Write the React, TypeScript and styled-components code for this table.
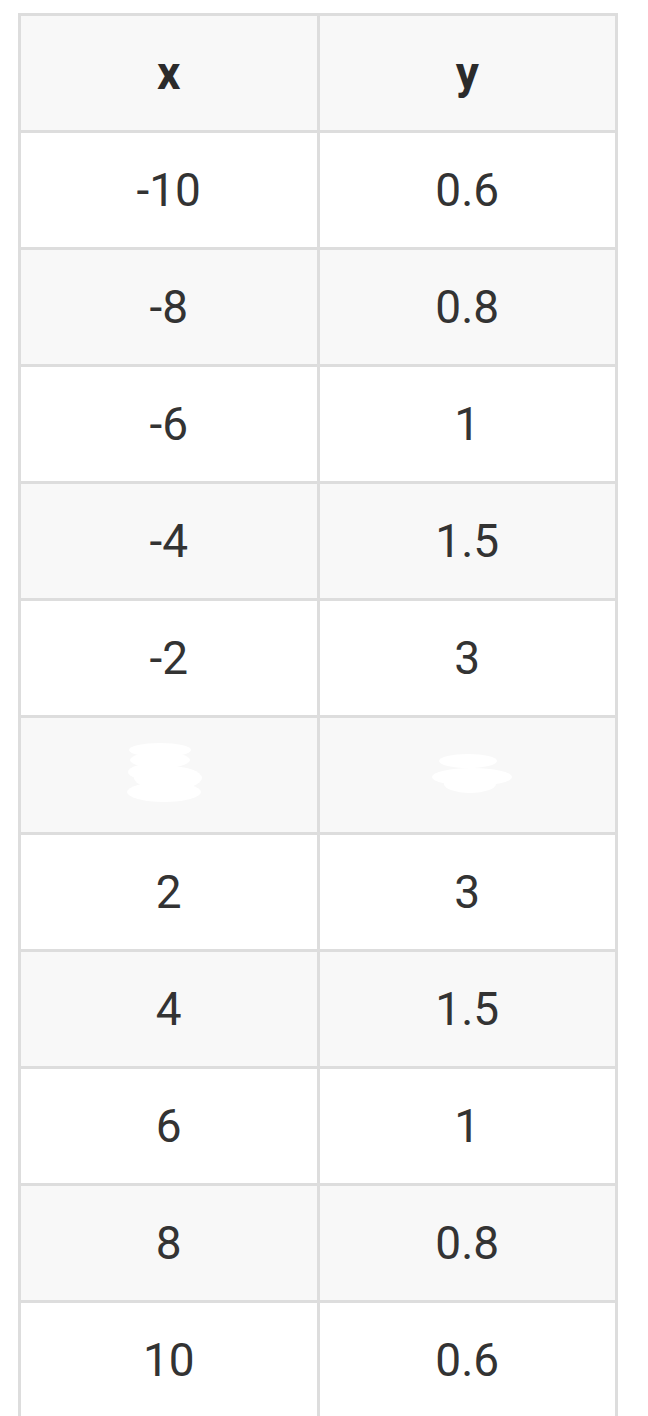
import React from "react";
import styled, { createGlobalStyle } from "styled-components";

const Global = createGlobalStyle`
  html, body { margin: 0; padding: 0; background: #ffffff; }
  body { font-family: Roboto, "Noto Sans", Arial, sans-serif; }
`;

const Page = styled.div`
  padding: 13px 0 0 18px;
`;

const Table = styled.table`
  width: 600px;
  border-collapse: separate;
  border-spacing: 0;
  table-layout: fixed;
  border-top: 3px solid #dddddd;
  border-left: 3px solid #dddddd;
`;

const Row = styled.tr<{ $shade: boolean }>`
  background: ${(p) => (p.$shade ? "#f8f8f8" : "#ffffff")};
`;

const Cell = styled.td`
  height: 114px;
  padding: 0;
  text-align: center;
  vertical-align: middle;
  border-right: 3px solid #dddddd;
  border-bottom: 3px solid #dddddd;
  font-size: 46px;
  color: #333333;
  line-height: 1;
`;

const Head = styled(Cell).attrs({ as: "th" })`
  font-weight: 700;
  color: #2b2b2b;
`;

const Blob = styled.svg<{ $dx: number; $dy: number }>`
  display: block;
  margin: 0 auto;
  transform: translate(${(p) => p.$dx}px, ${(p) => p.$dy}px);
`;

const rows: [string, string][] = [
  ["-10", "0.6"],
  ["-8", "0.8"],
  ["-6", "1"],
  ["-4", "1.5"],
  ["-2", "3"],
  ["", ""],
  ["2", "3"],
  ["4", "1.5"],
  ["6", "1"],
  ["8", "0.8"],
  ["10", "0.6"],
];

const LeftScribble = () => (
  <Blob $dx={-4} $dy={-2} width="78" height="62" viewBox="0 0 78 62">
    <g fill="#ffffff">
      <ellipse cx="34" cy="8" rx="31" ry="7" />
      <ellipse cx="34" cy="18" rx="30" ry="8" />
      <ellipse cx="30" cy="30" rx="28" ry="9" />
      <ellipse cx="42" cy="36" rx="34" ry="12" />
      <ellipse cx="38" cy="50" rx="37" ry="10" />
    </g>
  </Blob>
);

const RightScribble = () => (
  <Blob $dx={4} $dy={0} width="86" height="48" viewBox="0 0 86 48">
    <g fill="#ffffff">
      <ellipse cx="40" cy="10" rx="29" ry="7" />
      <ellipse cx="44" cy="26" rx="40" ry="9" />
      <ellipse cx="42" cy="33" rx="26" ry="9" />
    </g>
  </Blob>
);

export default function App() {
  return (
    <>
      <Global />
      <Page>
        <Table>
          <thead>
            <Row $shade>
              <Head>x</Head>
              <Head>y</Head>
            </Row>
          </thead>
          <tbody>
            {rows.map(([x, y], i) => (
              <Row key={i} $shade={i % 2 === 1}>
                <Cell>{x === "" ? <LeftScribble /> : x}</Cell>
                <Cell>{y === "" ? <RightScribble /> : y}</Cell>
              </Row>
            ))}
          </tbody>
        </Table>
      </Page>
    </>
  );
}
